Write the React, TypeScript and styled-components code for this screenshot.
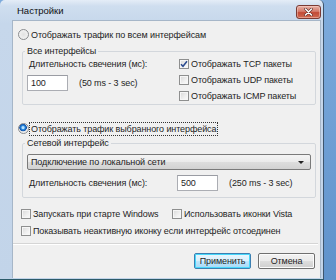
import styled, { createGlobalStyle } from 'styled-components';

const GlobalStyle = createGlobalStyle`
  html, body {
    margin: 0;
    padding: 0;
  }
  body {
    width: 336px;
    height: 280px;
    overflow: hidden;
    background: linear-gradient(180deg, #7eabdc 0%, #6b9cd2 60%, #5f92cb 100%);
    font-family: "Liberation Sans", Arial, sans-serif;
    font-size: 9px;
    letter-spacing: -0.1px;
    color: #1e1e1e;
  }
  * {
    box-sizing: border-box;
  }
`;

const Window = styled.div`
  width: 324px;
  height: 280px;
  display: flex;
  flex-direction: column;
  padding: 0 2px 1px 12px;
  background: linear-gradient(180deg, #e4edf7 0px, #cfdeef 6px, #c6d7eb 24px, #c2d4e9 100%);
  border-right: 1px solid #3d556e;
  border-bottom: 1px solid #2c5b6a;
  border-top-left-radius: 5px;
  border-top-right-radius: 5px;
`;

const TitleBar = styled.div`
  height: 20px;
  flex: none;
  display: flex;
  justify-content: space-between;
  align-items: flex-start;
  padding-left: 5px;
`;

const Title = styled.span`
  font-size: 9.5px;
  letter-spacing: 0;
  line-height: 12px;
  margin-top: 5px;
  color: #101010;
`;

const CloseButton = styled.div`
  width: 25px;
  height: 14px;
  margin-top: 5px;
  display: flex;
  align-items: center;
  justify-content: center;
  border: 1px solid #7a3a33;
  border-radius: 3px;
  background: linear-gradient(180deg, #e8b3a8 0%, #d47a6a 45%, #c24a36 55%, #cf6a52 100%);
  box-shadow: inset 0 0 0 1px rgba(255, 220, 210, 0.45);
`;

const Client = styled.div`
  flex: 1;
  display: flex;
  flex-direction: column;
  background: #f0f0f0;
  border: 1px solid #a6b6c8;
  border-bottom: none;
`;

const RadioRow = styled.label<{ $top: number }>`
  display: flex;
  align-items: center;
  height: 13px;
  margin: ${(p) => p.$top}px 0 0 5px;
  gap: 1px;
`;

const Radio = styled.span<{ $checked?: boolean }>`
  width: 11px;
  height: 11px;
  flex: none;
  border-radius: 50%;
  border: 1px solid #8a8c8f;
  background: ${(p) =>
    p.$checked
      ? 'radial-gradient(circle at 45% 40%, #b9e3ff 0 1px, #2c8be0 2px, #0d4fa8 3.5px, #e9e9e9 4px, #f7f7f7 100%)'
      : 'radial-gradient(circle at 50% 50%, #e2e2e2 0, #f8f8f8 100%)'};
`;

const Text = styled.span<{ $focus?: boolean }>`
  line-height: 12px;
  white-space: nowrap;
  padding: 0 1px;
  outline: ${(p) => (p.$focus ? '1px dotted #333' : 'none')};
  outline-offset: 0;
`;

const Group = styled.fieldset<{ $top: number; $bottom: number }>`
  margin: ${(p) => p.$top}px 4px 0 9px;
  padding: 0 0 ${(p) => p.$bottom}px 0;
  border: 1px solid #d3d7dc;
  border-radius: 2px;
  min-width: 0;
`;

const Legend = styled.legend`
  margin-left: 2px;
  padding: 0 2px;
  line-height: 12px;
`;

const SplitGrid = styled.div`
  display: grid;
  grid-template-columns: 152px 1fr;
  padding: 1px 0 0 4px;
`;

const Column = styled.div`
  display: flex;
  flex-direction: column;
`;

const Caption = styled.span`
  line-height: 12px;
  padding-left: 2px;
  white-space: nowrap;
`;

const FieldRow = styled.div<{ $top: number }>`
  display: flex;
  align-items: center;
  margin-top: ${(p) => p.$top}px;
`;

const TextBox = styled.div`
  width: 41px;
  height: 16px;
  flex: none;
  border: 1px solid #abadb3;
  border-top-color: #9a9ca3;
  background: #fff;
  padding-left: 3px;
  line-height: 14px;
`;

const Hint = styled.span`
  margin-left: 11px;
  white-space: nowrap;
`;

const CheckList = styled.div`
  display: flex;
  flex-direction: column;
  gap: 4px;
`;

const CheckRow = styled.label`
  display: flex;
  align-items: center;
  height: 12px;
  gap: 2px;
  white-space: nowrap;
`;

const Box = styled.span`
  width: 10px;
  height: 10px;
  flex: none;
  display: flex;
  align-items: center;
  justify-content: center;
  border: 1px solid #8e8f8f;
  background: linear-gradient(135deg, #d8d8d8 0%, #f0f0f0 60%, #fbfbfb 100%);
  box-shadow: inset 0 0 0 1px #f6f6f6;
`;

const Select = styled.div`
  height: 16px;
  margin: 5px 4px 0 4px;
  display: flex;
  align-items: center;
  justify-content: space-between;
  padding: 0 6px 0 3px;
  border: 1px solid #7a7a7a;
  border-radius: 2px;
  background: linear-gradient(180deg, #f4f4f4 0%, #ebebeb 48%, #dddddd 52%, #d2d2d2 100%);
  line-height: 12px;
`;

const Arrow = styled.span`
  width: 0;
  height: 0;
  border-left: 3px solid transparent;
  border-right: 3px solid transparent;
  border-top: 3px solid #222;
`;

const DurationGrid = styled.div`
  display: grid;
  grid-template-columns: 150px 41px auto;
  align-items: center;
  margin: 5px 0 0 4px;
  height: 16px;
`;

const OptionGrid = styled.div`
  display: grid;
  grid-template-columns: 151px 1fr;
  row-gap: 5px;
  margin: 10px 0 0 8px;
`;

const Separator = styled.div`
  margin: 6px 2px 0 0;
  height: 2px;
  border-top: 1px solid #d5d5d5;
  border-bottom: 1px solid #ffffff;
`;

const Footer = styled.div`
  display: flex;
  justify-content: flex-end;
  gap: 7px;
  padding: 8px 5px 0 0;
`;

const Button = styled.div<{ $default?: boolean }>`
  width: 57px;
  height: 16px;
  display: flex;
  align-items: center;
  justify-content: center;
  border: 1px solid ${(p) => (p.$default ? '#3c7fb1' : '#707070')};
  border-radius: 2px;
  background: ${(p) =>
    p.$default
      ? 'linear-gradient(180deg, #eaf6fd 0%, #d9f0fc 48%, #bee6fd 52%, #a7d9f5 100%)'
      : 'linear-gradient(180deg, #f2f2f2 0%, #ebebeb 48%, #dddddd 52%, #cfcfcf 100%)'};
  box-shadow: inset 0 0 0 1px ${(p) => (p.$default ? '#48d8fb' : '#fcfcfc')};
  line-height: 12px;
`;

function Check({ checked, label }: { checked?: boolean; label: string }) {
  return (
    <CheckRow>
      <Box>
        {checked && (
          <svg width="8" height="8" viewBox="0 0 8 8">
            <path d="M1 4.2 L3 6.3 L7 1.2" fill="none" stroke="#2a4a8f" strokeWidth="1.5" />
          </svg>
        )}
      </Box>
      <span>{label}</span>
    </CheckRow>
  );
}

export default function App() {
  return (
    <>
      <GlobalStyle />
      <Window>
        <TitleBar>
          <Title>Настройки</Title>
          <CloseButton>
            <svg width="9" height="8" viewBox="0 0 9 8">
              <path d="M1.5 1 L7.5 7 M7.5 1 L1.5 7" stroke="#5a2a25" strokeWidth="2.6" strokeLinecap="round" />
              <path d="M1.5 1 L7.5 7 M7.5 1 L1.5 7" stroke="#ffffff" strokeWidth="1.5" strokeLinecap="round" />
            </svg>
          </CloseButton>
        </TitleBar>
        <Client>
          <RadioRow $top={7}>
            <Radio />
            <Text>Отображать трафик по всем интерфейсам</Text>
          </RadioRow>

          <Group $top={4} $bottom={2}>
            <Legend>Все интерфейсы</Legend>
            <SplitGrid>
              <Column>
                <Caption>Длительность свечения (мс):</Caption>
                <FieldRow $top={5}>
                  <TextBox>100</TextBox>
                  <Hint>(50 ms - 3 sec)</Hint>
                </FieldRow>
              </Column>
              <CheckList>
                <Check checked label="Отображать TCP пакеты" />
                <Check label="Отображать UDP пакеты" />
                <Check label="Отображать ICMP пакеты" />
              </CheckList>
            </SplitGrid>
          </Group>

          <RadioRow $top={17}>
            <Radio $checked />
            <Text $focus>Отображать трафик выбранного интерфейса</Text>
          </RadioRow>

          <Group $top={2} $bottom={6}>
            <Legend>Сетевой интерфейс</Legend>
            <Select>
              <span>Подключение по локальной сети</span>
              <Arrow />
            </Select>
            <DurationGrid>
              <Caption>Длительность свечения (мс):</Caption>
              <TextBox>500</TextBox>
              <Hint>(250 ms - 3 sec)</Hint>
            </DurationGrid>
          </Group>

          <OptionGrid>
            <Check label="Запускать при старте Windows" />
            <Check label="Использовать иконки Vista" />
            <Check label="Показывать неактивную иконку если интерфейс отсоединен" />
          </OptionGrid>

          <Separator />

          <Footer>
            <Button $default>Применить</Button>
            <Button>Отмена</Button>
          </Footer>
        </Client>
      </Window>
    </>
  );
}
